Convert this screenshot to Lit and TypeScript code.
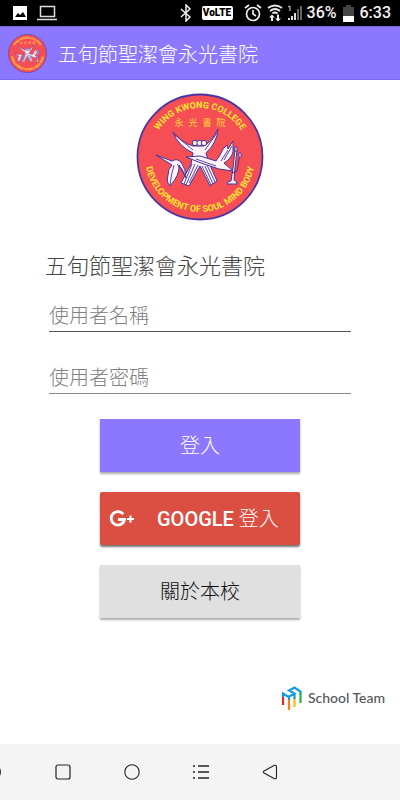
import { LitElement, html, svg, css } from "lit";
import { customElement } from "lit/decorators.js";

const figures = svg`
  <g fill="#fdf4fb" stroke="#46309c" stroke-width="1" stroke-linejoin="round">
    <path d="M37 39 Q46 50 57 53 H68 Q76 48 82 36 Q81 50 70 60 L73 70 L81 88 L74 93 L64 73 L53 93 L45 90 L55 71 L57 60 Q42 53 37 39Z"/>
    <circle cx="59" cy="50" r="2.700"/><circle cx="63.500" cy="50" r="2.700"/><circle cx="68" cy="50" r="2.700"/>
    <path d="M20 62 L36 68 Q41 65 45 69 Q50 76 50 85 L43 72 Q44 82 34 93 Q30 89 32 82 Q32 76 36 72Z"/>
    <path d="M50 64 L64 63 L80 68 Q84 63 87 56 L91 52 L92 56 L97 48 L97 59 Q95 66 88 70 L97 78 L83 76 L65 70Z"/>
    <path d="M99 57 L97 75 L95 88 Q91 88 91 91 H101 Q101 88 98 87 L99 75 L101 57Z"/>
    <path d="M104 61 L101 78 L96 80" fill="none"/>
    <ellipse cx="100" cy="56" rx="1.200" ry="2.500"/><ellipse cx="104" cy="62" rx="1.200" ry="2.500"/>
  </g>
  <path d="M56 71L48 91M59 71L50 92M62 72L53 90M69 73L77 91M66 73L75 92M71 72L79 89M39 42L57 57M81 40L69 57M41 71Q46 74 49 82M38 72Q35 82 34 92M85 68L92 57M88 67L96 53M60 66L80 73" fill="none" stroke="#46309c" stroke-width=".9"/>`;

@customElement("school-crest")
export class SchoolCrest extends LitElement {
  static styles = css`
    :host { display: block; }
    svg { display: block; width: 100%; height: 100%; }
    .ring { font: 700 9px Roboto, sans-serif; fill: #ffe52e; }
    .name { font: 400 9px "Noto Sans CJK TC", sans-serif; fill: #ffd735; }
  `;
  render() {
    return html`<svg viewBox="0 0 128 128" role="img" aria-label="Wing Kwong College">
      <defs>
        <path id="top" d="M15 64 A49 49 0 0 1 113 64" />
        <path id="bottom" d="M9 64 A55 55 0 0 0 119 64" />
      </defs>
      <circle cx="64" cy="64" r="62.5" fill="#f54f55" stroke="#4b35a3" stroke-width="1.8" />
      <text class="ring" text-anchor="middle"><textPath href="#top" startOffset="50%">WING KWONG COLLEGE</textPath></text>
      <text class="ring" text-anchor="middle"><textPath href="#bottom" startOffset="50%">DEVELOPMENT OF SOUL MIND BODY</textPath></text>
      <text class="name" text-anchor="middle" x="43 57 71 85" y="33">永光書院</text>
      ${figures}
    </svg>`;
  }
}

@customElement("status-bar")
export class StatusBar extends LitElement {
  static styles = css`
    :host { display: flex; align-items: center; justify-content: space-between; height: 26px; padding: 0 9px 0 12px; background: #000; color: #f4f4f4; font: 500 16px/28px Roboto, sans-serif; }
    svg { display: block; }
    .group { display: flex; align-items: center; gap: 9px; }
    .right { gap: 5px; }
    .volte { background: #fff; color: #000; border-radius: 2px; font: 900 10px/14px Roboto, sans-serif; width: 31px; text-align: center; margin: 0 6px 0 5px; }
  `;
  render() {
    return html`
      <div class="group">
        <svg width="16" height="16" viewBox="0 0 16 16"><path fill="#fff" fill-rule="evenodd" d="M1 1h14v14H1z M3 12h11l-3-5-3 3-2-2z"/></svg>
        <svg width="20" height="16" viewBox="0 0 20 16"><path d="M3.5 1.5h14v10h-14z M0 14.5h20" fill="none" stroke="#ddd" stroke-width="1.5"/></svg>
      </div>
      <div class="group right">
        <svg width="12" height="18" viewBox="0 0 12 18"><path d="M1 5l9 8-4 4V1l4 4-9 8" fill="none" stroke="#eee" stroke-width="1.5"/></svg>
        <span class="volte">VoLTE</span>
        <svg width="18" height="18" viewBox="1 0 18 18"><g fill="none" stroke="#eee" stroke-width="1.7"><circle cx="10" cy="10" r="6.5"/><path d="M10 6v4l3 2M2 4l4-3M18 4l-4-3"/></g></svg>
        <svg width="16" height="18" viewBox="0 0 16 18"><g fill="none" stroke="#eee" stroke-width="1.8"><path d="M1 4Q8-1 15 4M3 7Q8 3 13 7M5.500 9.500Q8 7.500 10.500 9.500"/></g><path fill="#eee" d="M5 10.500l3 3H6V17H4v-3.500H2z M11 17.500l-3-3h2v-4h2v4h2z"/></svg>
        <svg width="14" height="18" viewBox="0 0 14 18"><path d="M0 3l2-1v5" fill="none" stroke="#ddd"/><path d="M1 16v-2M4 16v-4M7 16V9" stroke="#ddd" stroke-width="2"/><path d="M10 16V5M13 16V2" stroke="#666" stroke-width="2"/></svg>
        <span>36%</span>
        <svg width="13" height="17" viewBox="0 0 13 17"><path fill="#444" d="M1 2h3V0h5v2h3v9H1z"/><path fill="#fff" d="M1 11h11v6H1z"/></svg>
        <span>6:33</span>
      </div>`;
  }
}

@customElement("app-root")
export class AppRoot extends LitElement {
  static styles = css`
    :host { display: flex; flex-direction: column; min-height: 100vh; background: #fff; font-family: Roboto, "Noto Sans CJK TC", sans-serif; font-weight: 300; }
    * { box-sizing: border-box; }
    header { display: flex; align-items: center; gap: 11px; height: 54px; padding: 0 8px; background: #8c78ff; border-top: 1px solid #7561d8; border-bottom: 1px solid #7d67f5; color: #fff; }
    header school-crest { width: 39px; height: 39px; }
    h1 { margin: 0; padding-top: 3px; font-size: 20px; line-height: 28px; font-weight: 300; }
    main { flex: 1; display: flex; flex-direction: column; padding: 13px 45px 0; }
    .crest { width: 128px; height: 128px; align-self: center; }
    h2 { margin: 29px 0 0; font-size: 22px; line-height: 34px; font-weight: 300; color: #444; }
    form { display: flex; flex-direction: column; }
    .fields { display: flex; flex-direction: column; gap: 30px; margin: 16px 4px 0; }
    .field { height: 32px; padding: 0; border: 0; border-bottom: 1px solid #555; border-radius: 0; background: none; outline: 0; font: 300 20px/28px Roboto, "Noto Sans CJK TC", sans-serif; color: #333; }
    .field[type="password"] { border-bottom-color: #888; }
    .field::placeholder { color: #808080; opacity: 1; }
    .actions { display: flex; flex-direction: column; gap: 20px; width: 200px; margin: 25px auto 0; }
    button { display: flex; align-items: center; justify-content: center; height: 53px; padding: 0; border: 0; font: 300 20px/28px Roboto, "Noto Sans CJK TC", sans-serif; box-shadow: 0 2px 2px #0005; }
    .login { background: #8c78ff; color: #fff; }
    .google { background: #db4e42; color: #fff; border-radius: 2px; justify-content: flex-start; padding-left: 9px; gap: 21px; box-shadow: 0 2px 2px #0008; }
    .google b { font-weight: 500; }
    .about { background: #e0e0e0; color: #111; }
    .brand { display: flex; align-items: center; justify-content: flex-end; gap: 6px; padding: 0 15px 33px 0; font: 500 14px/26px Lato, sans-serif; color: #55565a; }
    nav { display: flex; align-items: center; height: 56px; background: #f4f4f4; overflow: hidden; }
    nav button { width: 69px; flex: none; background: none; box-shadow: none; color: #222; }
    nav .edge { width: 28px; justify-content: flex-start; }
    svg { display: block; flex: none; }
  `;
  render() {
    return html`
      <status-bar></status-bar>
      <header><school-crest></school-crest><h1>五旬節聖潔會永光書院</h1></header>
      <main>
        <school-crest class="crest"></school-crest>
        <h2>五旬節聖潔會永光書院</h2>
        <form @submit=${(e: Event) => e.preventDefault()}>
          <div class="fields">
            <input class="field" type="text" aria-label="使用者名稱" placeholder="使用者名稱" />
            <input class="field" type="password" aria-label="使用者密碼" placeholder="使用者密碼" />
          </div>
          <div class="actions">
            <button class="login" type="submit">登入</button>
            <button class="google" type="button">
              <svg width="27" height="18" viewBox="0 0 27 18"><path d="M14.200 4.200A6.700 6.700 0 1 0 15.500 9.500H9" fill="none" stroke="#fff" stroke-width="2.800"/><path d="M21.500 5.500v7M18 9h7" stroke="#fff" stroke-width="2"/></svg>
              <span><b>GOOGLE</b> 登入</span>
            </button>
            <button class="about" type="button">關於本校</button>
          </div>
        </form>
      </main>
      <div class="brand">
        <svg width="21" height="26" viewBox="0 0 21 26"><g fill="none" stroke-width="2.200"><path d="M2 10v10" stroke="#e8262c"/><path d="M8 14v11" stroke="#f58220"/><path d="M13.500 13v9" stroke="#fdb913"/><path d="M19.500 8v10" stroke="#2bab4a"/><path d="M2 12V8.500l5.500 3.500 6-3.500L8 5.500l5.500-3 6 4V9M8 15v-3M13.500 14v-5" stroke="#1599e0"/></g></svg>
        <span>School Team</span>
      </div>
      <nav>
        <button class="edge" aria-label="Hide"><svg width="2" height="10" viewBox="0 0 2 10"><path d="M0 1q2 4 0 8" fill="#333"/></svg></button>
        <button aria-label="Recent"><svg width="16" height="16" viewBox="0 0 16 16"><rect x="1" y="1" width="14" height="14" rx="2" fill="none" stroke="#222" stroke-width="1.200"/></svg></button>
        <button aria-label="Home"><svg width="16" height="16" viewBox="0 0 16 16"><circle cx="8" cy="8" r="7.200" fill="none" stroke="#222" stroke-width="1.100"/></svg></button>
        <button aria-label="Menu"><svg width="16" height="16" viewBox="0 0 16 16"><path d="M5 2h11M5 8h11M5 14h11M0 2h2M0 8h2M0 14h2" stroke="#222" stroke-width="1.400"/></svg></button>
        <button aria-label="Back"><svg width="16" height="16" viewBox="0 0 16 16"><path d="M12.500 1.300L2 7Q.500 8 2 9l10.500 5.700q2 .5 2-1.700V3q0-2.200-2-1.700z" fill="none" stroke="#222" stroke-width="1.100"/></svg></button>
      </nav>`;
  }
}
